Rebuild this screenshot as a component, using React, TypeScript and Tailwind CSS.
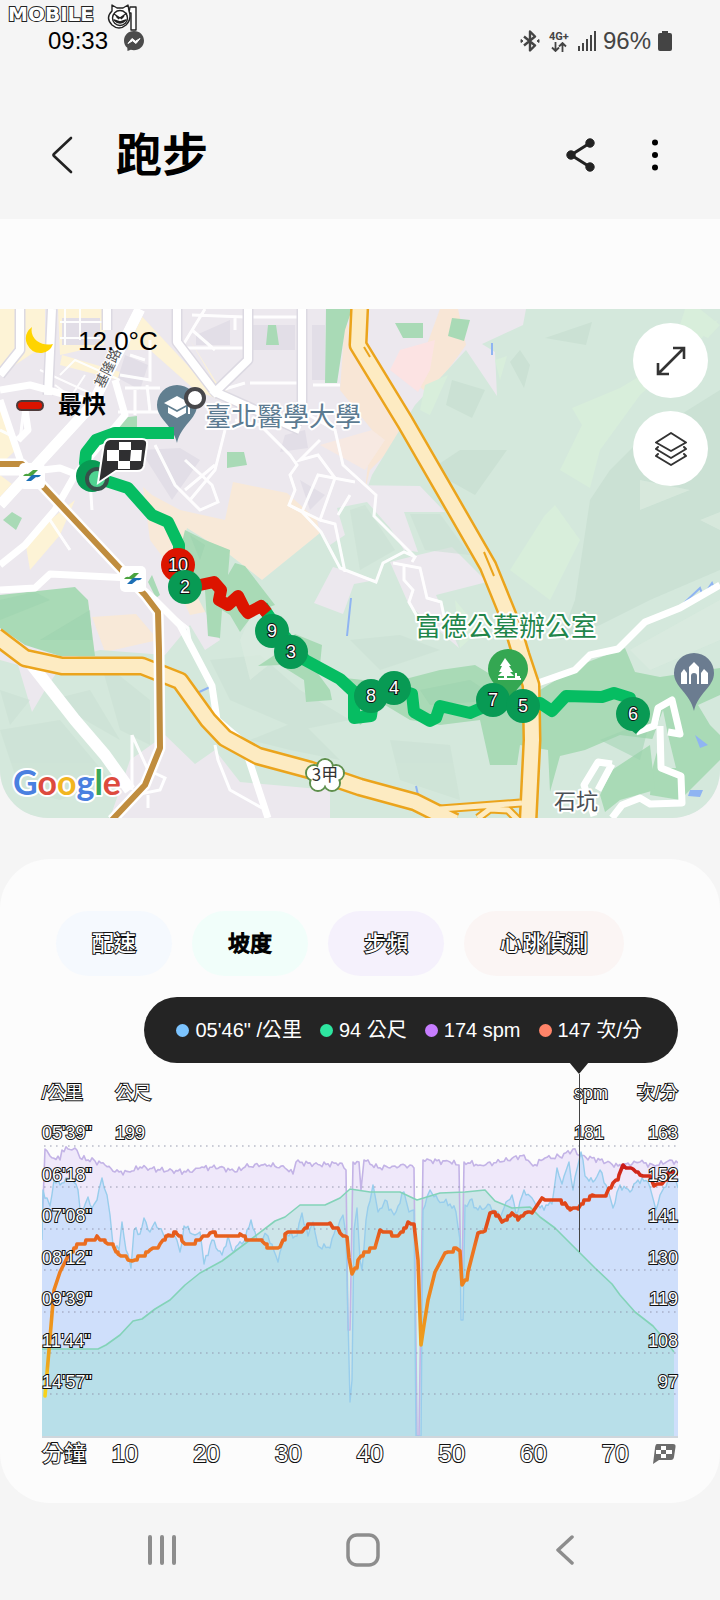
import { Fragment } from 'react';

type Pt = [number, number];

const toPoints = (pts: Pt[]) => pts.map((p) => p.join(',')).join(' ');

// resample a series and add a small repeatable wobble, steep drops are left alone
const roughen = (pts: Pt[], amp: number): Pt[] => {
  const out: Pt[] = [];
  pts.forEach(([x, y], i) => {
    out.push([x, y]);
    const next = pts[i + 1];
    if (!next || Math.abs(next[1] - y) > 60) return;
    for (let px = x + 2; px < next[0] - 1; px += 2) {
      const t = (px - x) / (next[0] - x);
      const n = Math.sin(px * 1.7) * 0.6 + Math.sin(px * 0.73) * 0.7;
      out.push([px, Math.round((y + (next[1] - y) * t + n * amp) * 10) / 10]);
    }
  });
  return out;
};

// heart rate only moves in whole beats
const stepped = (pts: Pt[]): Pt[] => {
  const out: Pt[] = [];
  pts.forEach(([x, y], i) => {
    out.push([x, y]);
    const next = pts[i + 1];
    if (!next || Math.abs(next[1] - y) > 14) return;
    for (let px = x + 3; px < next[0] - 1; px += 3) {
      const t = (px - x) / (next[0] - x);
      const v = Math.round((y + (next[1] - y) * t) / 4) * 4;
      out.push([px, v], [px + 2, v]);
    }
  });
  return out;
};

const heart: Pt[] = [[45, 1396], [49, 1350], [54, 1290], [60, 1272], [68, 1256], [77, 1244], [90, 1240], [97, 1236], [105, 1242], [113, 1245], [118, 1254], [128, 1260], [132, 1261], [140, 1256], [150, 1250], [160, 1244], [168, 1235], [176, 1233], [182, 1241], [190, 1244], [200, 1240], [210, 1233], [225, 1236], [240, 1234], [248, 1240], [262, 1241], [267, 1248], [280, 1247], [285, 1234], [302, 1232], [308, 1224], [330, 1223], [340, 1233], [347, 1237], [349, 1258], [352, 1274], [358, 1260], [364, 1252], [376, 1244], [380, 1230], [398, 1236], [408, 1222], [414, 1224], [418, 1260], [421, 1345], [424, 1325], [428, 1300], [435, 1272], [445, 1253], [456, 1248], [460, 1251], [462, 1285], [468, 1272], [478, 1233], [485, 1231], [490, 1213], [498, 1215], [502, 1222], [512, 1213], [518, 1220], [525, 1213], [532, 1213], [542, 1198], [550, 1200], [565, 1203], [570, 1210], [578, 1209], [584, 1200], [592, 1195], [606, 1195], [613, 1183], [619, 1175], [623, 1165], [633, 1169], [640, 1175], [650, 1176], [654, 1186], [662, 1184], [668, 1173], [678, 1174]];

const cadence: Pt[] = [[42, 1230], [45, 1149], [50, 1156], [60, 1160], [62, 1150], [75, 1148], [80, 1158], [95, 1161], [105, 1165], [115, 1172], [130, 1172], [140, 1167], [160, 1170], [190, 1172], [200, 1168], [220, 1167], [235, 1172], [245, 1167], [265, 1164], [285, 1168], [293, 1174], [296, 1162], [320, 1165], [340, 1163], [346, 1170], [348, 1330], [350, 1330], [353, 1162], [359, 1162], [361, 1190], [364, 1160], [378, 1168], [395, 1166], [410, 1165], [414, 1168], [417, 1436], [419, 1436], [423, 1160], [450, 1162], [459, 1165], [461, 1285], [462, 1285], [464, 1162], [480, 1165], [500, 1162], [524, 1155], [533, 1166], [545, 1158], [560, 1157], [573, 1149], [580, 1156], [600, 1160], [618, 1166], [640, 1162], [655, 1166], [670, 1160], [678, 1163]];

const pace: Pt[] = [[42, 1240], [43, 1190], [50, 1206], [54, 1180], [60, 1185], [66, 1178], [72, 1180], [78, 1190], [81, 1218], [88, 1197], [92, 1208], [97, 1200], [102, 1178], [107, 1195], [110, 1215], [113, 1245], [119, 1250], [122, 1222], [126, 1250], [131, 1268], [134, 1230], [140, 1234], [144, 1218], [150, 1232], [155, 1222], [164, 1236], [175, 1236], [180, 1252], [184, 1226], [195, 1235], [200, 1232], [204, 1264], [212, 1240], [222, 1255], [228, 1236], [232, 1250], [245, 1240], [251, 1220], [257, 1240], [268, 1236], [278, 1262], [285, 1235], [297, 1236], [302, 1213], [308, 1236], [313, 1222], [318, 1246], [330, 1248], [336, 1228], [343, 1215], [346, 1235], [350, 1402], [352, 1380], [354, 1230], [357, 1208], [360, 1260], [362, 1270], [366, 1220], [373, 1185], [378, 1212], [385, 1200], [394, 1215], [404, 1192], [409, 1212], [414, 1210], [416, 1436], [421, 1436], [423, 1210], [430, 1190], [438, 1200], [450, 1204], [456, 1212], [460, 1240], [461, 1320], [463, 1320], [465, 1205], [470, 1200], [478, 1210], [490, 1205], [500, 1218], [506, 1202], [512, 1195], [516, 1214], [524, 1190], [532, 1198], [540, 1208], [552, 1204], [557, 1168], [562, 1184], [569, 1162], [573, 1190], [578, 1165], [581, 1152], [585, 1176], [593, 1182], [600, 1170], [606, 1185], [613, 1208], [620, 1185], [630, 1192], [638, 1180], [648, 1182], [656, 1210], [660, 1195], [668, 1180], [672, 1172], [678, 1188]];

const elevation: Pt[] = [[42, 1349], [98, 1349], [106, 1345], [120, 1335], [133, 1321], [142, 1319], [155, 1309], [170, 1300], [185, 1285], [200, 1273], [222, 1261], [250, 1240], [275, 1221], [285, 1217], [300, 1205], [325, 1205], [340, 1198], [350, 1189], [370, 1192], [385, 1192], [400, 1192], [417, 1200], [440, 1193], [465, 1192], [485, 1190], [495, 1201], [512, 1208], [530, 1207], [540, 1217], [555, 1228], [579, 1252], [595, 1268], [612, 1284], [620, 1295], [635, 1312], [653, 1326], [665, 1340], [674, 1352]];

const gridLines = [1146, 1187, 1229, 1270, 1312, 1353, 1394];

const rows = [
  { pace: '05\'39"', height: '199', spm: '181', bpm: '163' },
  { pace: '06\'18"', bpm: '152' },
  { pace: '07\'08"', bpm: '141' },
  { pace: '08\'12"', bpm: '130' },
  { pace: '09\'39"', bpm: '119' },
  { pace: '11\'44"', bpm: '108' },
  { pace: '14\'57"', bpm: '97' },
];

const tabs = [
  { label: '配速', bg: 'bg-[#f5f9fe]', on: false },
  { label: '坡度', bg: 'bg-[#f1fefa]', on: true },
  { label: '步頻', bg: 'bg-[#f5f1fc]', on: false },
  { label: '心跳偵測', bg: 'bg-[#fbf5f4]', on: false },
];

const readings = [
  { text: '05\'46" /公里', dot: 'bg-[#7cc4ff]' },
  { text: '94 公尺', dot: 'bg-[#2ee6a0]' },
  { text: '174 spm', dot: 'bg-[#c77dff]' },
  { text: '147 次/分', dot: 'bg-[#ff8469]' },
];

const splits = [
  { n: 10, x: 178, y: 565, fill: '#dc1400' },
  { n: 2, x: 185, y: 587, fill: '#089a54' },
  { n: 9, x: 272, y: 631, fill: '#089a54' },
  { n: 3, x: 291, y: 652, fill: '#089a54' },
  { n: 8, x: 371, y: 696, fill: '#089a54' },
  { n: 4, x: 394, y: 688, fill: '#089a54' },
  { n: 7, x: 493, y: 700, fill: '#089a54' },
  { n: 5, x: 523, y: 706, fill: '#089a54' },
  { n: 6, x: 633, y: 714, fill: '#089a54' },
];

const petals = [[325, 767], [336, 773], [332, 783], [318, 783], [314, 773]];

const outlined = 'text-white [-webkit-text-stroke:2px_#111] [paint-order:stroke]';

function StationBadge({ x, y }: { x: number; y: number }) {
  return (
    <g transform={`translate(${x} ${y})`}>
      <rect x="-13" y="-13" width="26" height="26" rx="5" fill="#fff" />
      <path d="M-9 0 Q-7 -3 -4 -2 L1 -6 H6 L2 -2 Q0 1 -3 0 Z" fill="#4aa33f" />
      <path d="M9 -1 Q7 2 4 1 L-1 5 H-6 L-2 1 Q0 -2 3 -1 Z" fill="#1c6fb5" />
    </g>
  );
}

function MapView() {
  return (
    <svg viewBox="0 309 720 509" className="block w-full h-auto" role="img" aria-label="Google 地圖">
      <rect x="0" y="309" width="720" height="509" fill="#ece8ee" />

      {/* built-up blocks */}
      <path d="M0 309 H45 V345 L0 375 Z M58 309 H106 L104 345 L60 355 Z M62 355 L120 372 L118 380 L60 365 Z M135 309 L220 400 L195 390 L150 350 L128 350 Z M0 475 L20 490 L10 500 L0 505 Z M25 540 L75 500 L60 535 L30 570 Z M0 405 L16 450 L0 465 Z M190 340 L218 385 L240 400 L222 395 Z" fill="#fdf3d6" />
      <path d="M62 318 H100 V345 H62 Z M196 335 L230 320 V345 H196 Z M125 355 L148 365 L140 390 L118 378 Z M285 435 L305 430 L308 448 L280 452 Z M140 450 L180 448 L200 460 L172 500 Z M250 325 H295 V350 H252 Z M312 325 H325 V380 H312 Z M300 480 L325 495 L310 510 Z" fill="#e2dee7" />
      <path d="M143 487 L152 495 L180 510 L225 520 L233 482 L287 493 L317 520 L320 533 L300 550 L262 580 L230 570 L205 612 L190 615 L165 560 L150 540 Z" fill="#f8e9d8" />
      <path d="M92 617 L136 614 L158 640 L105 652 Z M0 660 L14 665 V690 L0 694 Z" fill="#f8e9d8" />
      <path d="M345 320 L365 360 L405 430 L385 455 L370 470 L365 490 L372 430 L340 390 Z M440 309 H458 L466 345 L430 395 L405 375 L425 350 Z" fill="#f8e6d6" />
      <path d="M400 350 L435 340 L430 370 L418 392 L390 370 Z" fill="#fce3e3" />
      <path d="M320 445 L372 430 L385 440 L365 470 Z" fill="#f7e9e2" />

      {/* hills */}
      <path d="M526 309 L523 325 L482 344 L495 352 L497 396 L466 350 L415 405 L372 475 L365 495 L340 500 L320 533 L262 580 L230 555 L187 528 L178 560 L220 640 L205 650 L190 625 L165 655 L100 650 L65 660 L45 690 L32 712 L18 665 L0 660 V818 H110 L130 760 L165 735 L195 764 L215 750 L240 782 L330 790 V818 H720 V309 Z" fill="#d4e8dc" />
      <path d="M345 485 L420 486 L445 512 H404 L418 552 L404 550 L390 528 L367 502 L337 508 L345 535 L330 545 L318 525 Z M418 555 L452 547 L487 582 L436 595 L459 648 L409 605 L390 562 Z M314 603 L333 567 L376 580 L354 584 L343 614 Z" fill="#ece8ee" />
      <g fill="#cbe1d4">
        <path d="M452 380 L485 390 L472 418 L446 405 Z M520 350 L530 365 L524 388 L510 362 Z M545 338 L592 322 L586 345 Z M460 450 L507 450 L475 495 L430 470 Z" />
        <path d="M720 390 L640 440 L610 470 L590 500 L575 600 L560 640 L600 625 L650 600 L720 570 Z" />
      </g>
      <g fill="#cbe1d4" opacity="0.6">
        <path d="M0 730 L60 720 L110 780 L60 800 L20 790 Z M390 740 L450 745 L460 800 L400 780 Z M350 640 L400 635 L440 650 L380 670 Z M50 700 L90 690 L120 740 Z M410 514 L440 514 L470 555 L425 550 Z" />
        <path d="M210 660 L260 655 L300 690 L350 720 L300 730 L230 700 Z M350 510 L365 505 L395 550 L360 570 Z M100 660 L150 700 L150 745 L120 730 Z M250 740 L300 720 L340 760 L290 750 Z M0 690 L30 700 L10 725 Z" />
      </g>
      <g fill="#d8eedb">
        <path d="M572 408 L620 388 L650 370 L690 330 L718 320 L700 340 L640 395 L600 450 L590 488 L560 470 L582 425 Z M545 515 L555 505 L580 540 L550 600 L510 570 Z M425 385 L448 375 L430 415 L420 410 Z M495 360 L507 356 L500 380 Z M460 648 L455 600 L480 630 Z" />
        <path d="M685 309 H700 L720 325 L708 338 L680 325 Z" />
      </g>
      <path d="M640 480 L690 490 L640 510 Z M630 650 L720 600 V640 L650 670 Z M700 520 L720 512 V530 Z M240 640 L258 600 L275 660 L250 680 Z" fill="#dcebe0" opacity="0.7" />

      {/* parks and woods */}
      <g fill="#a9dab6">
        <path d="M326 309 H352 L345 330 L337 383 H325 Z M268 325 H276 L279 345 H266 Z M227 452 H244 L247 465 L227 468 Z M12 512 L22 518 L16 530 L3 520 Z M395 323 H423 V338 H403 Z M452 318 L470 320 L464 341 L448 336 Z M120 418 L137 416 V430 H116 Z" />
        <path d="M0 595 L75 587 L88 600 L95 656 H60 L25 645 L0 628 Z M185 530 L205 540 L230 550 L228 575 L235 563 L245 566 L275 605 L255 612 L240 632 L230 615 L222 610 L220 638 L208 636 L205 590 L190 570 L180 550 Z" />
        <path d="M148 582 L152 575 L160 595 L156 598 Z M295 634 L322 645 L320 665 L308 660 L330 690 L332 700 L306 702 L304 680 L280 665 L258 666 L282 650 Z" />
        <path d="M345 678 L390 683 L440 670 L475 665 L500 680 L540 690 L580 665 L625 648 L635 672 L660 677 L720 668 V760 L680 800 L650 795 L652 770 L660 740 L620 735 L585 750 L560 756 L550 792 L548 750 L520 745 L517 765 H490 L480 720 L440 725 L410 720 L385 705 L360 725 Z" />
        <path d="M612 770 L650 745 L655 790 L620 800 L605 812 L600 795 Z" />
      </g>
      <path d="M0 600 L35 592 L50 600 L0 620 Z M190 535 L205 545 L200 560 Z M420 690 L470 680 L500 700 L430 705 Z M600 740 L650 720 L640 760 Z M40 640 L90 610 L92 640 Z" fill="#9cd1ad" opacity="0.5" />
      <path d="M585 757 L612 760 L600 792 L580 800 L570 780 Z M698 705 L720 695 V735 L710 725 Z M663 710 L668 735 L676 768 H662 L652 740 Z" fill="#d4e8dc" />
      <path d="M351 598 L347 636 M492 343 V355 M195 694 L210 687 M683 604 L700 588 L703 596 L712 583 L715 590 M416 786 L418 795" stroke="#8fb4f2" strokeWidth="2" fill="none" />
      <path d="M695 735 L708 745 L700 748 Z M690 790 H703 L700 797 L688 796 Z" fill="#8fb4f2" />

      {/* minor streets */}
      <g stroke="#fff" strokeWidth="3" fill="none" opacity="0.95">
        <path d="M60 322 H105 M65 309 V345 M80 309 V340 M60 338 H100 M40 370 L105 400 M60 375 L75 360 L120 380 M55 385 L75 400 M85 375 L72 395" strokeWidth="2" />
        <path d="M192 315 L245 317 H300 M205 309 L180 350 M192 330 L215 350 M235 317 V330 M250 383 H300 L305 325 M180 348 H245 M245 383 L215 392 M313 385 H340 M130 355 L145 360 M120 375 L150 380 V340" />
        <path d="M125 388 H160 M118 412 H170 M135 390 V415 M147 385 L150 412" />
        <path d="M155 445 L175 485 L200 510 L218 502 L212 485 L185 460 M225 430 L215 470 L190 500 M185 490 L215 465 M235 420 L260 425 L290 455 L297 465 L290 475 L295 490 L289 505 L320 520 L335 478 L318 455 L300 460 L320 440" />
        <path d="M300 410 L335 430 L343 465 L376 495 L374 516 L415 557 M289 505 L302 512 L321 532 L340 568 L376 582 L383 563 L404 552 L415 557 L412 562 M320 520 L335 524 L345 572 M350 495 L338 515 M302 512 L318 475 L355 482" />
        <path d="M393 563 L420 568 L427 598 L441 602 L444 616 M404 566 V580 L413 590 L409 602 L418 618" />
        <path d="M0 430 L20 440 L25 400 M90 480 L92 510 M50 520 L70 550 M165 610 L188 628 L190 640" />
        <path d="M132 735 L148 770 L165 778 L160 790 L135 795 M132 735 V790 M215 745 L218 760 L230 790 L262 808 M148 795 V808" />
      </g>

      {/* main streets */}
      <path d="M20 309 V350 L0 375 M52 309 L48 395 M107 309 V330 M177 309 V342 L215 392 L300 430 M248 309 V360 L212 395 M302 309 V410 M140 309 L92 405 L0 505" stroke="#dcd9e2" strokeWidth="11" fill="none" strokeLinejoin="round" />
      <g stroke="#fff" fill="none" strokeLinejoin="round">
        <path d="M20 309 V350 L0 375 M52 309 L48 395 M107 309 V330 M177 309 V342 L215 392 L300 430 M248 309 V360 L212 395 M302 309 V410" strokeWidth="8" />
        <path d="M140 309 L92 405 L0 505" strokeWidth="11" />
        <path d="M0 390 L30 385 L85 400 M0 400 L22 465 M25 410 L28 430 L18 440 M0 472 H25 L60 468 L78 475 M115 380 L125 415 L75 475 L55 510 L25 545 L0 565" strokeWidth="7" />
        <path d="M0 590 L35 588 L50 574 L130 578 L155 600 L180 625 L212 686 L217 720 L243 742 L268 818" strokeWidth="7" />
        <path d="M28 660 L75 720 L105 755 L130 790" strokeWidth="12" />
        <path d="M538 683 L575 670 L590 655 L618 649 L645 622 L680 608 L720 585" strokeWidth="7" />
        <path d="M636 732 L654 726 L658 708 L672 700 L680 734 L668 732 M660 726 L661 768 L681 776 L682 803 L650 804 L640 798 L622 805 L612 818 M612 764 L598 762 L584 785 L594 816 M612 764 L598 790" strokeWidth="7" />
      </g>

      {/* expressways */}
      <g fill="none" strokeLinejoin="round">
        <g stroke="#eba41c" strokeWidth="19">
          <path d="M-4 636 L25 658 L62 666 H142 L180 681 L208 720 L225 738 L258 756 L310 770 L360 787 L415 802 L455 822" />
          <path d="M360 300 L358 345 L405 422 L450 500 L488 566 L512 625 L521 655 L531 685 L532 740 L528 822" />
        </g>
        <path d="M440 809 L520 803 M478 818 L490 809 L508 810 L520 822" stroke="#eba41c" strokeWidth="9" />
        <path d="M440 809 L522 803 M478 818 L490 809 L508 810 L520 822" stroke="#fdebc2" strokeWidth="5" />
        <g stroke="#fdebc2" strokeWidth="14">
          <path d="M-4 636 L25 658 L62 666 H142 L180 681 L208 720 L225 738 L258 756 L310 770 L360 787 L415 802 L455 822" />
          <path d="M360 300 L358 345 L405 422 L450 500 L488 566 L512 625 L521 655 L531 685 L532 740 L528 822" />
        </g>
        <path d="M364 347 L370 357 M484 552 L494 576" stroke="#eba41c" strokeWidth="2" />
        <path d="M0 464 H22 L112 560 L145 595 L158 612 L159 650 L160 748 L145 785 L112 820" stroke="#fff" strokeWidth="11" />
        <path d="M0 464 H22 L112 560 L145 595 L158 612 L159 650 L160 748 L145 785 L112 820" stroke="#c08d3e" strokeWidth="6" />
      </g>
      <StationBadge x={32} y={476} />
      <StationBadge x={133} y={579} />

      {/* place names */}
      <g fontFamily='"Noto Sans CJK TC", sans-serif' stroke="#fff" strokeWidth="4" strokeLinejoin="round" paintOrder="stroke">
        <g fontSize="14" strokeWidth="2" fill="#555">
          <text transform="translate(103 389) rotate(-64)">基隆路</text>
        </g>
        <text x="205" y="426" fontSize="26" fill="#5c7b91">臺北醫學大學</text>
        <text x="415" y="636" fontSize="26" fill="#21854a">富德公墓辦公室</text>
        <text x="554" y="809" fontSize="22" fill="#4a4f55">石坑</text>
      </g>

      {/* pins */}
      <path d="M177 385 a20 20 0 0 1 20 20 c0 14 -16 20 -20 38 c-4 -18 -20 -24 -20 -38 a20 20 0 0 1 20 -20 Z" fill="#617f90" />
      <path d="M164 403 L177 396 L190 403 L177 410 Z M168 407 V413 L177 418 L186 413 V407 L177 412 Z M188 404 H190 V414 H188 Z" fill="#fff" />
      <path d="M694 653 a20 20 0 0 1 20 20 c0 14 -16 20 -20 38 c-4 -18 -20 -24 -20 -38 a20 20 0 0 1 20 -20 Z" fill="#6b7c90" />
      <path d="M681 684 V673 L684 669 L687 673 V684 Z M689 684 V667 L694 662 L699 667 V684 H697 V676 a3 3 0 0 0 -6 0 V684 Z M701 684 V673 L704 669 L708 673 V684 Z" fill="#fff" />
      <path d="M508 649 a20 20 0 0 1 20 20 c0 14 -16 20 -20 38 c-4 -18 -20 -24 -20 -38 a20 20 0 0 1 20 -20 Z" fill="#34a752" />
      <path d="M505 658 L511 666 H509 L513 672 H510 L514 676 H507 V678 H521 V680 H498 V678 H504 V676 H498 L502 672 H499 L502 666 H500 Z M515 673 h2 v3 h3 v3 h-5 Z" fill="#fff" />

      {/* recorded track */}
      <g fill="none" stroke="#06bd62" strokeWidth="12" strokeLinejoin="round" strokeLinecap="butt">
        <path d="M174 433 H115 L96 440 L86 453 L85 463 L97 478 L128 488 L152 515 L168 522 L179 545 V562" />
        <path d="M262 606 L275 625 L305 660 L340 679 L354 692 V718 L371 716 L373 702 L394 688 L412 694 L414 712 L430 721 L436 718 L440 706 L470 713 L493 703 L523 706 L540 703 L552 711 L566 696 L602 697 L614 693 L630 698 L633 714" />
      </g>
      <path d="M200 585 L214 582 L221 590 L219 600 L228 605 L238 596 L244 608 L248 613 L261 606 L267 613" fill="none" stroke="#dc1400" strokeWidth="12" strokeLinejoin="round" />
      <path d="M622 723 L636 734 L645 724 Z" fill="#089a54" />

      {splits.map((s) => (
        <Fragment key={s.n}>
          <circle cx={s.x} cy={s.y} r="17" fill={s.fill} />
          <text
            x={s.x}
            y={s.y + 6}
            textAnchor="middle"
            fontFamily='"Liberation Sans", sans-serif'
            fontSize="18"
            fill="#fff"
            stroke="#111"
            strokeWidth="2"
            paintOrder="stroke"
          >
            {s.n}
          </text>
        </Fragment>
      ))}

      {/* finish and start markers */}
      <circle cx="92" cy="476" r="16" fill="#089a54" />
      <circle cx="97" cy="479" r="10" fill="#4fd391" stroke="#37504a" strokeWidth="4" />
      <path d="M110 439 H142 Q148 439 147 445 L144 466 Q143 471 137 471 H116 L98 483 L103 450 Q104 439 110 439 Z" fill="#2f2f31" stroke="#fff" strokeWidth="2" />
      <path d="M119 442 H131 V450 H119 Z M107 450 H119 V461 H107 Z M131 450 H142 L141 461 H130 Z M118 461 H130 V469 H118 Z" fill="#fff" />
      <circle cx="195" cy="398" r="9" fill="#fff" stroke="#47474a" strokeWidth="4" />

      {/* road shield */}
      {petals.map(([x, y]) => (
        <circle key={`${x}-${y}`} cx={x} cy={y} r="8" fill="none" stroke="#5e8f4c" strokeWidth="2" />
      ))}
      {petals.map(([x, y]) => (
        <circle key={`${x}-${y}`} cx={x} cy={y} r="7" fill="#fff" />
      ))}
      <circle cx="325" cy="776" r="9" fill="#fff" />
      <text x="325" y="781" textAnchor="middle" fontFamily='"Noto Sans CJK TC", sans-serif' fontSize="17" fill="#333">3甲</text>

      <text x="13" y="795" fontFamily="Lato, sans-serif" fontSize="34" fontWeight="700" stroke="#fff" strokeWidth="4" strokeLinejoin="round" paintOrder="stroke">
        <tspan fill="#4a80e0">G</tspan>
        <tspan fill="#dd4b3e">o</tspan>
        <tspan fill="#f2b61f">o</tspan>
        <tspan fill="#4a80e0">g</tspan>
        <tspan fill="#3aa757">l</tspan>
        <tspan fill="#dd4b3e">e</tspan>
      </text>
    </svg>
  );
}

function Chart() {
  const area = (pts: Pt[]) => `${pts[0][0]},1437 ${toPoints(pts)} ${pts[pts.length - 1][0]},1437`;
  const spm = roughen(cadence, 2.4);
  const speed = roughen(pace, 3);
  return (
    <svg viewBox="42 1121 636 317" className="block w-full h-auto" role="img" aria-label="運動圖表">
      <defs>
        <linearGradient id="bpm" gradientUnits="userSpaceOnUse" x1="0" y1="1160" x2="0" y2="1400">
          <stop offset="0" stopColor="#c4121a" />
          <stop offset="0.12" stopColor="#df3f18" />
          <stop offset="0.28" stopColor="#e2501a" />
          <stop offset="0.36" stopColor="#ec7222" />
          <stop offset="0.6" stopColor="#ee8c1c" />
          <stop offset="0.86" stopColor="#eda81c" />
          <stop offset="0.92" stopColor="#f7d21a" />
        </linearGradient>
      </defs>
      <polygon points={area(spm)} fill="#efe8fa" />
      <polygon points={area(speed)} fill="#cfdffb" />
      <polygon points={area(elevation)} fill="#8de0c8" fillOpacity="0.34" />
      <g fill="none" strokeLinejoin="round">
        <polyline points={toPoints(spm)} stroke="#c3b3e6" strokeWidth="1.6" />
        <polyline points={toPoints(speed)} stroke="#98cdec" strokeWidth="1.4" />
        <polyline points={toPoints(elevation)} stroke="#83d3b8" strokeWidth="1.6" />
        {gridLines.map((y) => (
          <line key={y} x1="44" x2="678" y1={y} y2={y} stroke="#8e93a8" strokeOpacity="0.6" strokeWidth="1.6" strokeDasharray="1.6 4.4" />
        ))}
        <polyline points={toPoints(stepped(heart))} stroke="url(#bpm)" strokeWidth="3.6" strokeLinecap="round" />
      </g>
      <rect x="42" y="1436" width="636" height="2" fill="#cfd6dc" />
    </svg>
  );
}

export default function App() {
  return (
    <div className='relative min-h-screen bg-[#f5f5f5] text-black font-["Liberation_Sans","Noto_Sans_CJK_TC",sans-serif]'>
      {/* watermark */}
      <div className="absolute left-2 top-1 flex items-start gap-3">
        <span className='font-["DejaVu_Sans",sans-serif] text-xl leading-5 font-bold text-white [-webkit-text-stroke:2px_#222] [paint-order:stroke]'>MOBILE</span>
        <svg viewBox="0 0 32 28" className="w-8 h-7" fill="#fff" stroke="#222" strokeWidth="1.4" strokeLinejoin="round">
          <path d="M24 3 H30 V26 H25 V9 H23 Z" />
          <path d="M6 7 L6 1 L11 4 H17 L22 1 L23 7 Q26 15 20 21 Q13 27 6 21 Q-1 14 6 7 Z" />
          <circle cx="14" cy="14" r="7.5" />
          <path d="M8 10 L14 14 L21 9 M10 12 L13 15 M18 12 L15 15" fill="none" />
          <path d="M8 16 Q14 22 20 16 L14 18 Z" fill="#222" />
        </svg>
      </div>

      <div className="flex h-20 items-center justify-between px-12 pt-[2px]">
        <div className="flex items-center gap-4">
          <span className="text-2xl leading-6">09:33</span>
          <svg viewBox="0 0 20 20" className="size-5">
            <path d="M10 0 C4.300 0 0 4.200 0 9.700 C0 12.600 1.200 15.100 3.300 16.800 L3.500 20 L6.800 18.800 C13.500 20.600 20 16.300 20 9.700 C20 4.200 15.700 0 10 0 Z" fill="#4b4b4b" />
            <path d="M4 12.500 L8 7.500 L11.500 10.200 L16 7.500 L12 12.500 L8.500 9.800 Z" fill="#fff" stroke="#fff" strokeLinejoin="round" />
          </svg>
        </div>
        <div className="flex items-center gap-[7px] text-[#444]">
          <svg viewBox="0 0 20 22" className="w-5 h-[22px]" fill="none" stroke="#444" strokeWidth="2.4" strokeLinejoin="round">
            <path d="M4 6.500 L15 15.500 L10 20.500 V1.500 L15 6.500 L4 15.500" />
            <path d="M1 9.500 V12.500 L3 11 Z M19 9.500 V12.500 L17 11 Z" fill="#444" strokeWidth="1" />
          </svg>
          <div className="flex w-6 flex-col items-center">
            <span className="text-[11px] leading-[11px] font-bold font-[Roboto,sans-serif]">4G+</span>
            <svg viewBox="0 0 16 10" className="w-4 h-[10px]" fill="none" stroke="#444" strokeWidth="1.800">
              <path d="M4.500 0 V8.500 M1 5.500 L4.500 9 L8 5.500 M11.500 10 V1.500 M8 4.500 L11.500 1 L15 4.500" />
            </svg>
          </div>
          <svg viewBox="0 0 18 20" className="w-[18px] h-5" fill="#444">
            <path d="M0 15 h2 v5 h-2 Z M4 12 h2 v8 h-2 Z M8 8 h2 v12 h-2 Z M12 4 h2 v16 h-2 Z M16 0 h2 v20 h-2 Z" />
          </svg>
          <span className="text-2xl leading-6">96%</span>
          <svg viewBox="0 0 14 20" className="w-[14px] h-5" fill="#444">
            <path d="M4 0 H10 V2 H12 Q14 2 14 4 V18 Q14 20 12 20 H2 Q0 20 0 18 V4 Q0 2 2 2 H4 Z" />
          </svg>
        </div>
      </div>

      <header className="flex h-[139px] items-center pl-[50px] pr-14 pt-[10px]">
        <button aria-label="返回">
          <svg viewBox="0 0 24 40" className="w-6 h-10" fill="none" stroke="#222" strokeWidth="2.600" strokeLinecap="round" strokeLinejoin="round">
            <path d="M21 3 L4 19 Q3 20 4 21 L21 37" />
          </svg>
        </button>
        <h1 className="ml-[42px] text-[46px] leading-[56px] font-bold">跑步</h1>
        <button aria-label="分享" className="ml-auto">
          <svg viewBox="0 0 32 36" className="w-8 h-9" fill="#222" stroke="#222">
            <path d="M26 6 L7 18 L26 30" fill="none" strokeWidth="3" />
            <circle cx="26" cy="6" r="4.200" />
            <circle cx="7" cy="18" r="4.200" />
            <circle cx="26" cy="30" r="4.200" />
          </svg>
        </button>
        <button aria-label="更多" className="ml-[52px]">
          <svg viewBox="0 0 16 36" className="w-4 h-9" fill="#000">
            <circle cx="7" cy="5.500" r="3" />
            <circle cx="7" cy="18" r="3" />
            <circle cx="7" cy="30.500" r="3" />
          </svg>
        </button>
      </header>

      <section className="overflow-hidden rounded-b-[48px] bg-[#fcfcfc] pt-[90px]">
        <div className="relative">
          <MapView />
          <div className="absolute left-4 top-4 flex flex-col gap-8">
            <div className="flex h-8 items-center gap-6 pl-2">
              <svg viewBox="0 0 30 30" className="size-[30px]">
                <path d="M8 1 Q-1 8 3 18 Q8 28 18 27 Q26 26 29 18 Q20 20 13 15 Q6 9 8 1 Z" fill="#ffd400" />
              </svg>
              <span className="text-[26px] leading-8">12.0°C</span>
            </div>
            <div className="flex h-8 items-center gap-[14px]">
              <span className="h-[11px] w-7 rounded-full border-2 border-[#4d3a3a] bg-[#dc1400]" />
              <span className="text-2xl leading-8 font-bold">最快</span>
            </div>
          </div>
          <div className="absolute right-3 top-[14px] flex flex-col gap-[13px]">
            <button aria-label="放大" className="flex size-[75px] items-center justify-center rounded-full bg-white">
              <svg viewBox="0 0 32 32" className="size-8" fill="none" stroke="#333" strokeWidth="2.600">
                <path d="M3 29 L29 3 M18 3 H29 V14 M3 18 V29 H14" />
              </svg>
            </button>
            <button aria-label="圖層" className="flex size-[75px] items-center justify-center rounded-full bg-white">
              <svg viewBox="0 0 34 34" className="size-[34px]" fill="none" stroke="#333" strokeWidth="2" strokeLinejoin="round" strokeLinecap="round">
                <path d="M17 1 L32 10.500 L17 19 L2 10.500 Z" />
                <path d="M4 15 L2 17 L17 26 L32 17 L30 15 M4 22 L2 24 L17 33 L32 24 L30 22" />
              </svg>
            </button>
          </div>
        </div>
      </section>

      <section className="mt-[41px] rounded-[50px] bg-[#fcfcfc] px-[42px] pb-[33px] pt-[52px]">
        <div className="ml-[14px] flex gap-5">
          {tabs.map((t) => (
            <button
              key={t.label}
              className={`h-[65px] rounded-full px-9 text-[22px] font-medium ${t.bg} ${t.on ? 'text-black [-webkit-text-stroke:1px_#000]' : outlined}`}
            >
              {t.label}
            </button>
          ))}
        </div>

        <div className="relative ml-auto mt-[21px] flex h-[66px] w-fit items-center gap-[18px] whitespace-nowrap rounded-full bg-[#242424] pl-8 pr-9 text-xl text-white">
          {readings.map((r) => (
            <div key={r.text} className="flex items-center gap-[6px]">
              <span className={`size-[13px] rounded-full ${r.dot}`} />
              <span>{r.text}</span>
            </div>
          ))}
          {/* cursor */}
          <svg viewBox="0 0 20 190" className="absolute right-[89px] top-[65px] z-10 h-[190px] w-5">
            <path d="M0 0 H20 L10 12 Z" fill="#242424" />
            <rect x="10" y="12" width="1" height="178" fill="#444" />
          </svg>
        </div>

        <div className={`mt-[18px] flex h-6 items-center text-lg leading-6 ${outlined}`}>
          <span className="w-[73px]">/公里</span>
          <span>公尺</span>
          <span className="ml-auto w-[60px]">spm</span>
          <span className="w-11 text-right">次/分</span>
        </div>

        <div className="relative mt-4">
          <Chart />
          <div className={`absolute inset-x-0 top-0 flex h-[273px] flex-col justify-between text-lg leading-6 ${outlined}`}>
            {rows.map((r) => (
              <div key={r.pace} className="flex h-6">
                <span className="w-[73px]">{r.pace}</span>
                <span>{r.height}</span>
                <span className="ml-auto w-[60px]">{r.spm}</span>
                <span className="w-11 text-right">{r.bpm}</span>
              </div>
            ))}
          </div>
        </div>

        <div className={`grid h-8 grid-cols-[42px_repeat(7,minmax(0,1fr))_22px] items-center whitespace-nowrap text-center text-2xl leading-8 ${outlined}`}>
          <span className="text-left text-[22px]">分鐘</span>
          {[10, 20, 30, 40, 50, 60, 70].map((m) => (
            <span key={m}>{m}</span>
          ))}
          <svg viewBox="0 0 24 22" className="-ml-1 h-[22px] w-6">
            <path d="M5 1 H21 Q24 1 23.500 4 L22 14 Q21.500 17 19 17 H7 L1 21 L3 5 Q3.500 1 5 1 Z" fill="#6c6c6c" />
            <path d="M9 3 h5 v4 h-5 Z M4 7 h5 v4 h-5 Z M14 7 h6 v4 h-6 Z M9 11 h5 v4 h-5 Z" fill="#fff" />
          </svg>
        </div>
      </section>

      <nav className="grid h-[94px] grid-cols-3 items-center pl-[62px] pr-[56px]">
        <button aria-label="最近" className="flex justify-center">
          <svg viewBox="0 0 32 32" className="size-8" stroke="#8d8d8d" strokeWidth="4" strokeLinecap="round">
            <path d="M4 3 V29 M16 3 V29 M28 3 V29" />
          </svg>
        </button>
        <button aria-label="主畫面" className="flex justify-center">
          <svg viewBox="0 0 34 34" className="size-[34px]" fill="none" stroke="#8d8d8d" strokeWidth="3.500">
            <rect x="2" y="2" width="30" height="30" rx="9" />
          </svg>
        </button>
        <button aria-label="上一頁" className="flex justify-center">
          <svg viewBox="0 0 20 32" className="w-5 h-8" fill="none" stroke="#8d8d8d" strokeWidth="3.500" strokeLinecap="round" strokeLinejoin="round">
            <path d="M18 3 L4 16 L18 29" />
          </svg>
        </button>
      </nav>
    </div>
  );
}
